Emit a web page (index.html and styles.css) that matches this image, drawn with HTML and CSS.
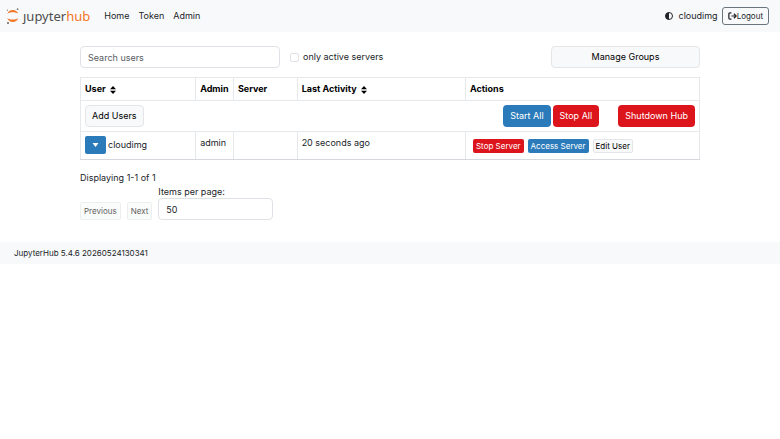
FILE: index.html
```html
<!DOCTYPE html>
<html lang="en">
<head>
  <meta charset="UTF-8" />
  <meta name="viewport" content="width=device-width, initial-scale=1.0" />
  <title>JupyterHub</title>
  <link rel="stylesheet" href="styles.css">
</head>
<body>
  <nav class="navbar">
    <a class="brand" href="#">
      <svg class="brand-mark" viewBox="0 0 14 16" aria-hidden="true">
        <path d="M1.2 5.8C2.2 3.4 4.3 2 6.8 2s4.6 1.4 5.6 3.8C11 4.8 9 4.3 6.8 4.3S2.6 4.8 1.2 5.8z" fill="#f37726"/>
        <path d="M1.2 10c1 2.500 3.100 3.900 5.600 3.900s4.600-1.400 5.600-3.900c-1.400 1.100-3.400 1.600-5.600 1.600S2.600 11.100 1.200 10z" fill="#f37726"/>
        <circle cx="11.600" cy="1.200" r="0.900" fill="#767677"/>
        <circle cx="1.400" cy="2.200" r="0.600" fill="#767677"/>
        <circle cx="2" cy="14.900" r="1" fill="#616262"/>
      </svg>
      <span class="brand-name">ȷupyter<span class="brand-hub">hub</span></span>
    </a>
    <ul class="nav-links">
      <li><a href="#">Home</a></li>
      <li><a href="#">Token</a></li>
      <li><a href="#">Admin</a></li>
    </ul>
    <div class="nav-user">
      <button class="theme" type="button" aria-label="Toggle theme">
        <svg viewBox="0 0 16 16" aria-hidden="true"><circle cx="8" cy="8" r="7" fill="none" stroke="currentColor" stroke-width="2"/><path d="M8 1a7 7 0 0 0 0 14z" fill="currentColor"/></svg>
      </button>
      <span>cloudimg</span>
      <a class="btn btn-logout" href="#">
        <svg viewBox="0 0 16 14" aria-hidden="true"><path d="M6 1.500H3.500a2 2 0 0 0-2 2v7a2 2 0 0 0 2 2H6M6 7h8M10.500 3l4 4-4 4" fill="none" stroke="currentColor" stroke-width="2.200"/></svg>Logout
      </a>
    </div>
  </nav>

  <main class="container">
    <div class="toolbar">
      <input class="control" type="text" placeholder="Search users" aria-label="Search users" />
      <div class="check">
        <input type="checkbox" id="active" />
        <label for="active">only active servers</label>
      </div>
      <button class="btn btn-light" type="button">Manage Groups</button>
    </div>

    <table class="users">
      <colgroup>
        <col class="col-user"><col class="col-admin"><col class="col-server"><col class="col-activity"><col>
      </colgroup>
      <thead>
        <tr>
          <th>User <svg class="sort" viewBox="0 0 6 8" aria-hidden="true"><path d="M3 0l3 3.200H0zM3 8L0 4.800h6z"/></svg></th>
          <th>Admin</th>
          <th>Server</th>
          <th>Last Activity <svg class="sort" viewBox="0 0 6 8" aria-hidden="true"><path d="M3 0l3 3.200H0zM3 8L0 4.800h6z"/></svg></th>
          <th>Actions</th>
        </tr>
      </thead>
      <tbody>
        <tr>
          <td colspan="5">
            <div class="bulk">
              <button class="btn btn-light" type="button">Add Users</button>
              <div class="bulk-servers">
                <button class="btn btn-primary" type="button">Start All</button>
                <button class="btn btn-danger" type="button">Stop All</button>
              </div>
              <button class="btn btn-danger" type="button">Shutdown Hub</button>
            </div>
          </td>
        </tr>
        <tr class="user-row">
          <td>
            <div class="user">
              <button class="btn btn-primary toggle" type="button" aria-label="Show details"><svg viewBox="0 0 6 4" aria-hidden="true"><path d="M0 0h6L3 4z" fill="currentColor"/></svg></button>
              <span>cloudimg</span>
            </div>
          </td>
          <td>admin</td>
          <td></td>
          <td>20 seconds ago</td>
          <td>
            <div class="actions">
              <button class="btn btn-xs btn-danger" type="button">Stop Server</button>
              <button class="btn btn-xs btn-primary" type="button">Access Server</button>
              <button class="btn btn-xs btn-light" type="button">Edit User</button>
            </div>
          </td>
        </tr>
      </tbody>
    </table>

    <p class="count">Displaying 1-1 of 1</p>
    <div class="pager">
      <button class="btn btn-sm btn-light" type="button" disabled>Previous</button>
      <button class="btn btn-sm btn-light" type="button" disabled>Next</button>
      <div class="per-page">
        <label for="limit">Items per page:</label>
        <input class="control" type="text" inputmode="numeric" id="limit" value="50" />
      </div>
    </div>
  </main>

  <footer class="footer">JupyterHub 5.4.6 20260524130341</footer>
</body>
</html>
```

FILE: styles.css
```css
* {
  box-sizing: border-box;
}
body {
  margin: 0;
  font-family: Inter, "Liberation Sans", sans-serif;
  font-size: 9px;
  line-height: 14px;
  color: #212529;
  background-color: #fff;
}
a {
  color: inherit;
  text-decoration: none;
}
button, input {
  font: inherit;
  color: inherit;
}
.navbar {
  display: flex;
  align-items: center;
  min-height: 32px;
  padding: 0 11px 0 6px;
  background-color: #f8f9fa;
}
.brand {
  display: flex;
  align-items: center;
  gap: 3px;
}
.brand-mark {
  width: 14px;
  height: 16px;
}
.brand-name {
  font-family: "Noto Sans", sans-serif;
  font-size: 13px;
  line-height: 16px;
  color: #4e4e4e;
}
.brand-hub {
  color: #f37726;
}
.nav-links {
  display: flex;
  gap: 9px;
  margin: 0 0 0 14px;
  padding: 0;
  list-style: none;
}
.nav-user {
  display: flex;
  align-items: center;
  gap: 4px;
  margin-left: auto;
}
.theme {
  display: flex;
  padding: 0 1px;
  border: 0;
  background: none;
}
.theme svg {
  width: 8px;
  height: 8px;
}
.btn {
  padding: 3px 6px;
  border: 1px solid transparent;
  border-radius: 4px;
  line-height: 14px;
  text-align: center;
  white-space: nowrap;
}
.btn-light {
  color: #000;
  background-color: #f8f9fa;
  border-color: #e4e6e8;
}
.btn-primary {
  color: #fff;
  background-color: #2b7bba;
}
.btn-danger {
  color: #fff;
  background-color: #dc151d;
}
.btn-sm {
  padding: 2px 3px;
  border-radius: 2px;
  font-size: 8px;
  line-height: 12px;
}
.btn-xs {
  padding: 0 2px;
  border-radius: 2px;
  font-size: 8px;
  line-height: 12px;
}
.btn:disabled {
  opacity: 0.65;
}
.btn-logout {
  display: flex;
  align-items: center;
  padding: 1px 5px;
  border-color: #6c757d;
  border-radius: 3px;
  font-size: 8px;
}
.btn-logout svg {
  width: 9px;
  height: 8px;
}
.container {
  margin: 0 80px;
  padding: 14px 0 22px;
}
.control {
  width: 100%;
  height: 22px;
  padding: 3px 7px;
  border: 1px solid #dee2e6;
  border-radius: 4px;
  background-color: #fff;
}
.control::placeholder {
  color: #595c5f;
  opacity: 1;
}
.toolbar {
  display: grid;
  grid-template-columns: 200fr 251fr 149fr;
  gap: 10px;
  align-items: center;
}
.check {
  display: flex;
  align-items: center;
  gap: 4px;
}
.check input {
  width: 9px;
  height: 9px;
  margin: 0;
  border: 1px solid #dee2e6;
  border-radius: 2px;
  appearance: none;
}
.check input:checked {
  background-color: #2b7bba;
}
.users {
  width: 100%;
  margin: 9px 0 11px;
  border-collapse: collapse;
  table-layout: fixed;
}
.col-user {
  width: 18.6%;
}
.col-admin {
  width: 6.1%;
}
.col-server {
  width: 10.3%;
}
.col-activity {
  width: 27.2%;
}
.users th, .users td {
  padding: 4px;
  border: 1px solid #e6e9ec;
  text-align: left;
  vertical-align: top;
}
.users th {
  color: #000;
  white-space: nowrap;
}
.users .user-row td {
  padding-bottom: 5px;
  border-bottom-color: #d5d9dd;
}
.sort {
  width: 6px;
  height: 8px;
  margin-left: 2px;
  vertical-align: -2px;
}
.bulk {
  display: flex;
  align-items: center;
}
.bulk-servers {
  display: flex;
  gap: 2px;
  margin: 0 19px 0 auto;
}
.user {
  display: flex;
  align-items: center;
  gap: 2px;
}
.toggle {
  display: flex;
  align-items: center;
  padding: 0 6px;
  height: 18px;
  border-radius: 2px;
}
.toggle svg {
  width: 7px;
  height: 4px;
}
.actions {
  display: flex;
  gap: 4px;
  padding: 3px 3px 0;
}
.count {
  margin: 0;
}
.pager {
  display: flex;
  align-items: flex-end;
  gap: 6px;
}
.per-page {
  width: 115px;
}
.per-page label {
  display: block;
  line-height: 13px;
}
.footer {
  padding: 4px 14px;
  background-color: #f8f9fa;
  font-size: 8px;
}
```
